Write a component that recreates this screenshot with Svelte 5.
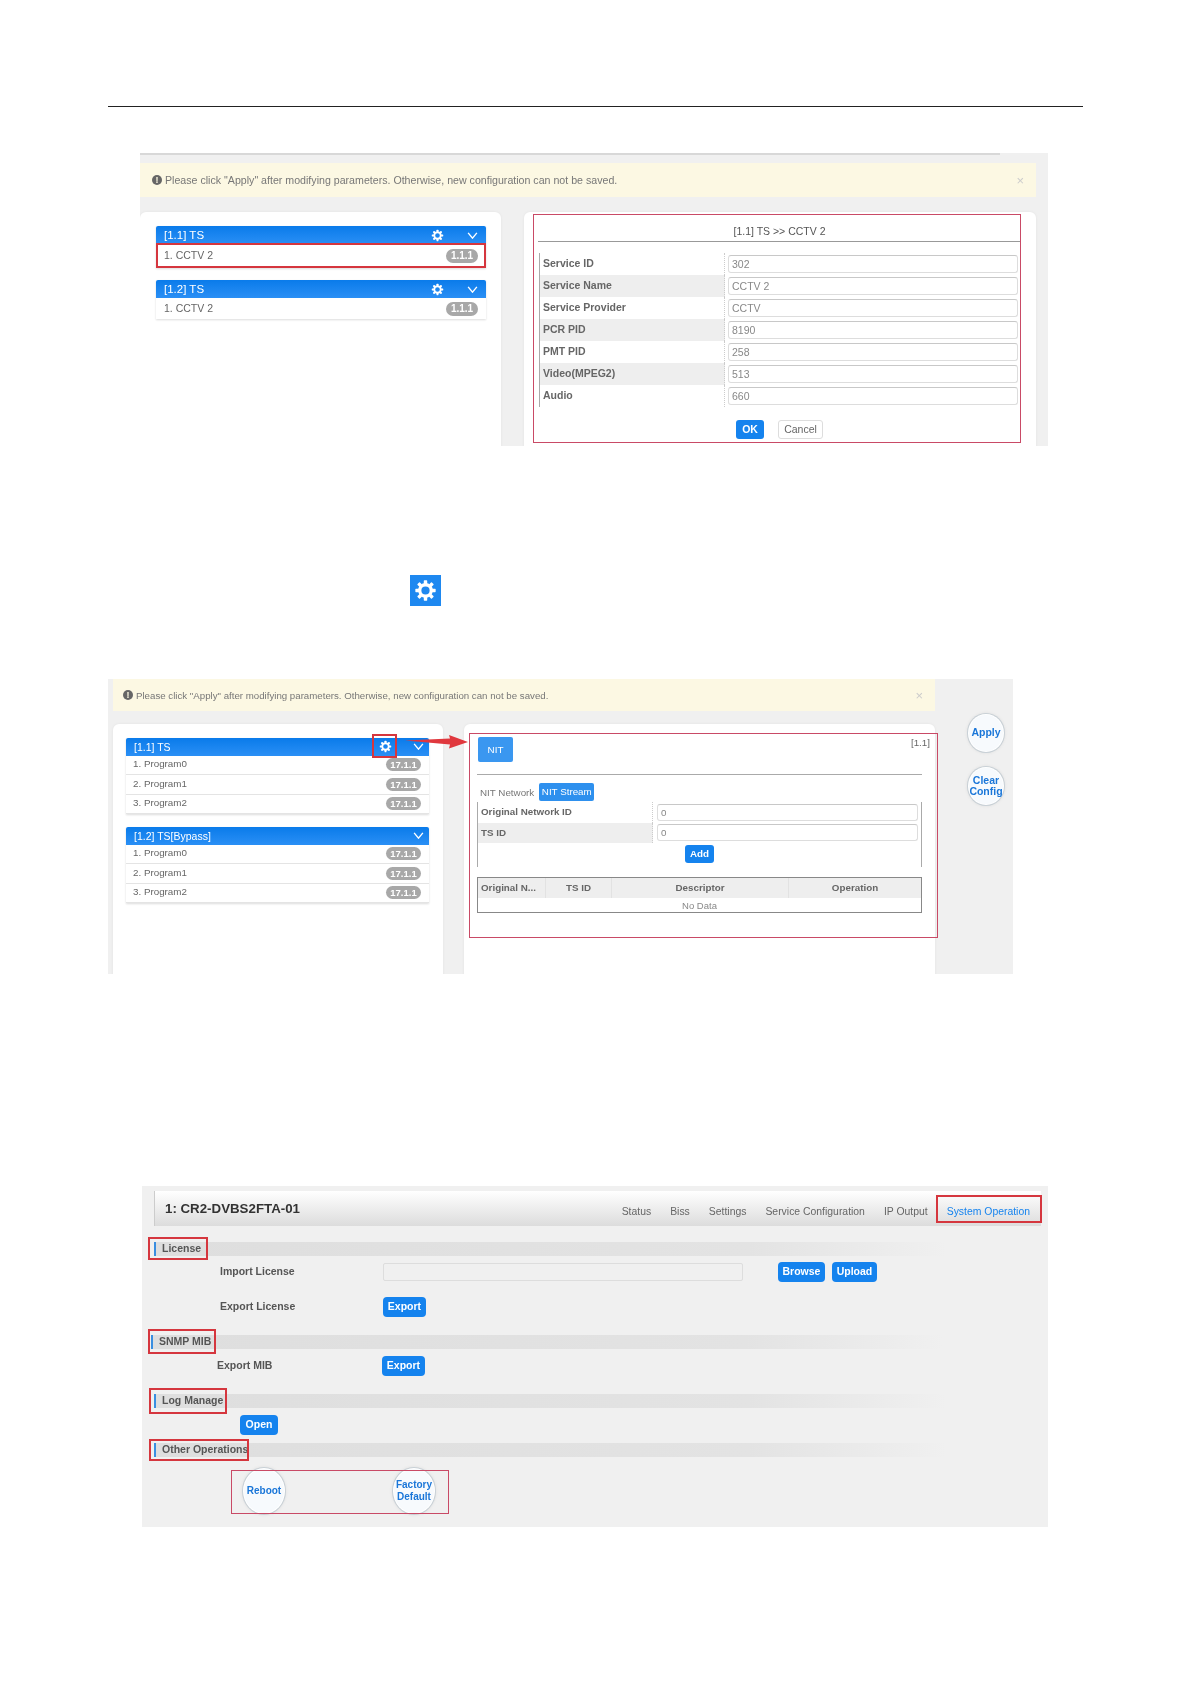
<script>
  const serviceFields = [
    ['Service ID', '302'],
    ['Service Name', 'CCTV 2'],
    ['Service Provider', 'CCTV'],
    ['PCR PID', '8190'],
    ['PMT PID', '258'],
    ['Video(MPEG2)', '513'],
    ['Audio', '660']
  ];
  const programs = ['1. Program0', '2. Program1', '3. Program2'];
  const alertText = 'Please click "Apply" after modifying parameters. Otherwise, new configuration can not be saved.';
  const navItems = ['Status', 'Biss', 'Settings', 'Service Configuration', 'IP Output'];
  const gearTeeth = [0, 45, 90, 135, 180, 225, 270, 315];
</script>

{#snippet gear(cls)}
  <svg class={cls} viewBox="0 0 24 24" aria-hidden="true">
    <circle cx="12" cy="12" r="6" fill="none" stroke="#fff" stroke-width="3.4"/>
    {#each gearTeeth as angle}
      <rect x="10.2" y="1.4" width="3.6" height="4" rx="0.7" fill="#fff" transform="rotate({angle} 12 12)"/>
    {/each}
  </svg>
{/snippet}

{#snippet groupHead(title, hasGear)}
  <div class="group-head">
    <span class="group-title">{title}</span>
    {#if hasGear}{@render gear('head-gear')}{/if}
    <svg class="chevron" viewBox="0 0 12 8" aria-hidden="true">
      <polyline points="1,1 6,7 11,1" fill="none" stroke="#fff" stroke-width="1.6"/>
    </svg>
  </div>
{/snippet}

{#snippet alertBar()}
  <div class="alert">
    <span class="alert-icon">!</span>
    <span class="alert-text">{alertText}</span>
    <span class="alert-close">×</span>
  </div>
{/snippet}

{#snippet section(title, markClass, barClass)}
  <div class="sec {barClass}">
    <span class="sec-label">{title}</span>
    <span class="mark {markClass}"></span>
  </div>
{/snippet}

<div class="page">
  <div class="page-rule"></div>

  <!-- service edit -->
  <section class="shot shot-service">
    <div class="top-strip"></div>
    {@render alertBar()}
    <div class="cards cards-service">
      <div class="card list-card">
        <div class="group">
          {@render groupHead('[1.1] TS', true)}
          <div class="row marked">
            <span class="row-text">1. CCTV 2</span><span class="badge">1.1.1</span>
            <span class="mark mark-row"></span>
          </div>
        </div>
        <div class="group second">
          {@render groupHead('[1.2] TS', true)}
          <div class="row">
            <span class="row-text">1. CCTV 2</span><span class="badge">1.1.1</span>
          </div>
        </div>
      </div>
      <div class="card edit-card">
        <span class="mark mark-edit"></span>
        <div class="edit-title">[1.1] TS &gt;&gt; CCTV 2</div>
        <div class="field-table">
          {#each serviceFields as [label, value]}
            <div class="field">
              <span class="field-label">{label}</span>
              <span class="field-input">{value}</span>
            </div>
          {/each}
        </div>
        <div class="edit-actions">
          <span class="btn btn-ok">OK</span>
          <span class="btn-plain">Cancel</span>
        </div>
      </div>
    </div>
  </section>

  <div class="inline-icon">{@render gear('inline-gear')}</div>

  <!-- NIT -->
  <section class="shot shot-nit">
    <div class="nit-main">
      {@render alertBar()}
      <div class="cards cards-nit">
        <div class="card nit-list">
          <div class="group">
            {@render groupHead('[1.1] TS', true)}
            {#each programs as p}
              <div class="row prog"><span class="row-text">{p}</span><span class="badge wide">17.1.1</span></div>
            {/each}
            <span class="mark mark-gear"></span>
            <svg class="arrow" viewBox="0 0 64 14" aria-hidden="true">
              <path d="M0 5.5 L45 3.5 L44 0 L63 7 L44 13.5 L45 9.5 Z" fill="#e0383e"/>
            </svg>
          </div>
          <div class="group second-nit">
            {@render groupHead('[1.2] TS[Bypass]', false)}
            {#each programs as p}
              <div class="row prog"><span class="row-text">{p}</span><span class="badge wide">17.1.1</span></div>
            {/each}
          </div>
        </div>
        <div class="card nit-card">
          <span class="mark mark-nit"></span>
          <div class="nit-top">
            <span class="nit-tab">NIT</span>
            <span class="nit-id">[1.1]</span>
          </div>
          <div class="subtabs">
            <span>NIT Network</span>
            <span class="subtab-on">NIT Stream</span>
          </div>
          <div class="nit-form">
            <div class="nit-field">
              <span class="field-label">Original Network ID</span>
              <span class="field-input">0</span>
            </div>
            <div class="nit-field">
              <span class="field-label">TS ID</span>
              <span class="field-input">0</span>
            </div>
            <div class="nit-add"><span class="btn btn-add">Add</span></div>
          </div>
          <div class="nit-table">
            <div class="nit-thead">
              <span class="left">Original N...</span>
              <span>TS ID</span>
              <span>Descriptor</span>
              <span>Operation</span>
            </div>
            <div class="nit-empty">No Data</div>
          </div>
        </div>
      </div>
    </div>
    <div class="side-actions">
      <span class="round side">Apply</span>
      <span class="round side">Clear<br />Config</span>
    </div>
  </section>

  <!-- system operation -->
  <section class="shot shot-system">
    <header class="sys-head">
      <span class="sys-title">1: CR2-DVBS2FTA-01</span>
      <nav class="sys-nav">
        {#each navItems as item}<span>{item}</span>{/each}
        <span class="nav-on">System Operation<span class="mark mark-nav"></span></span>
      </nav>
    </header>

    {@render section('License', 'mark-license', 'sec-license')}
    <div class="op-row op-import">
      <span>Import License</span>
      <span class="file-input"></span>
      <span class="btn btn-op browse">Browse</span>
      <span class="btn btn-op upload">Upload</span>
    </div>
    <div class="op-row op-export">
      <span>Export License</span>
      <span class="btn btn-op">Export</span>
    </div>

    {@render section('SNMP MIB', 'mark-snmp', 'sec-snmp')}
    <div class="op-row op-mib">
      <span>Export MIB</span>
      <span class="btn btn-op">Export</span>
    </div>

    {@render section('Log Manage', 'mark-log', 'sec-log')}
    <div class="op-open"><span class="btn btn-op">Open</span></div>

    {@render section('Other Operations', 'mark-other', 'sec-other')}
    <div class="op-rounds">
      <span class="mark mark-rounds"></span>
      <span class="round big">Reboot</span>
      <span class="round big">Factory<br />Default</span>
    </div>
  </section>
</div>

<style>
  :global(body) {
    margin: 0;
    background: #fff;
  }

  .page {
    width: 1191px;
    height: 1684px;
    overflow: hidden;
    padding-top: 106px;
    box-sizing: border-box;
    font-family: 'Liberation Sans', Arial, sans-serif;
    font-size: 10.5px;
    color: #666;
  }

  .page-rule {
    height: 1px;
    width: 975px;
    margin-left: 108px;
    background: #222;
  }

  .shot {
    background: #f0f0f0;
    box-sizing: border-box;
    position: relative;
    filter: blur(0.35px);
  }

  .mark {
    position: absolute;
    box-sizing: border-box;
    border: 2.5px solid #d5363e;
    pointer-events: none;
  }

  /* first shot */
  .shot-service {
    margin: 46px 0 0 140px;
    width: 908px;
    height: 293px;
    overflow: hidden;
  }

  .top-strip {
    height: 2px;
    width: 860px;
    background: #d8d8d8;
  }

  .alert {
    display: flex;
    align-items: center;
    gap: 3px;
    background: #fcf8e3;
    box-sizing: border-box;
    color: #777;
    padding-left: 12px;
    padding-right: 12px;
  }

  .shot-service .alert {
    margin: 8px 12px 0 0;
    height: 34px;
    font-size: 10.63px;
  }

  .alert-icon {
    width: 10px;
    height: 10px;
    border-radius: 50%;
    background: #666;
    color: #fcf8e3;
    font-size: 9px;
    font-weight: bold;
    line-height: 10px;
    text-align: center;
  }

  .alert-close {
    margin-left: auto;
    color: #ccc;
    font-size: 13px;
  }

  .cards {
    display: flex;
  }

  .cards-service {
    margin-top: 15px;
    gap: 23px;
  }

  .card {
    background: #fff;
    border-radius: 6px 6px 0 0;
    box-sizing: border-box;
    position: relative;
    height: 300px;
    box-shadow: 0 0 3px rgba(0, 0, 0, 0.06);
  }

  .list-card {
    width: 361px;
    padding: 14px 15px 0 16px;
  }

  .group {
    position: relative;
    box-shadow: 0 1px 2px rgba(0, 0, 0, 0.14);
  }

  .group.second {
    margin-top: 12px;
  }

  .group.second .row {
    height: 21px;
  }

  .group-head {
    display: flex;
    align-items: center;
    height: 18px;
    padding: 0 8px;
    color: #fff;
    font-size: 11.5px;
    border-radius: 2px 2px 0 0;
    background: linear-gradient(180deg, #0a7bea, #2a8ff5);
  }

  .group-title {
    flex: 1;
  }

  .head-gear {
    width: 13px;
    height: 13px;
    margin-right: 23px;
  }

  .chevron {
    width: 11px;
    height: 7px;
  }

  .row {
    display: flex;
    align-items: center;
    justify-content: space-between;
    position: relative;
    height: 24px;
    padding: 0 8px;
    color: #666;
    background: #fff;
  }

  .row-text {
    margin-top: -2px;
  }

  .mark-row {
    inset: -1px 0 0 0;
  }

  .badge {
    width: 32px;
    height: 14px;
    border-radius: 7px;
    background: #a8a8a8;
    color: #fff;
    font-weight: bold;
    font-size: 10px;
    line-height: 14px;
    text-align: center;
  }

  .badge.wide {
    width: 35px;
    height: 13px;
    line-height: 13px;
    font-size: 9.5px;
  }

  .edit-card {
    width: 512px;
    padding: 2px 15px 0 14px;
  }

  .mark-edit {
    border-width: 1px;
    border-color: #c94a66;
    left: 9px;
    top: 2px;
    width: 488px;
    height: 229px;
  }

  .edit-title {
    height: 27px;
    line-height: 34px;
    text-align: center;
    border-bottom: 1px solid #999;
    color: #555;
  }

  .field-table {
    margin-top: 11px;
    margin-left: 1px;
    margin-right: 3px;
    border-left: 1px solid #aaa;
  }

  .field {
    display: grid;
    grid-template-columns: 185px 1fr;
    height: 22px;
    align-items: center;
  }

  .field:nth-child(even) .field-label {
    background: #eee;
  }

  .field-label {
    display: block;
    height: 100%;
    padding-left: 3px;
    line-height: 20px;
    font-weight: bold;
    color: #666;
    border-right: 1px dotted #ccc;
    box-sizing: border-box;
  }

  .field-input {
    height: 16px;
    margin-left: 3px;
    padding-left: 3px;
    line-height: 16px;
    border: 1px solid #ddd;
    border-top-color: #c8c8c8;
    border-radius: 3px;
    background: #fff;
    color: #888;
  }

  .edit-actions {
    display: flex;
    justify-content: center;
    gap: 14px;
    margin-top: 13px;
  }

  .btn {
    display: inline-block;
    box-sizing: border-box;
    text-align: center;
    color: #fff;
    background: #1583ee;
    border-radius: 3px;
  }

  .btn-ok {
    width: 28px;
    height: 19px;
    line-height: 19px;
    font-weight: bold;
  }

  .btn-plain {
    box-sizing: border-box;
    width: 45px;
    height: 19px;
    line-height: 17px;
    text-align: center;
    border: 1px solid #ddd;
    border-radius: 3px;
    color: #666;
  }

  .inline-icon {
    display: flex;
    align-items: center;
    justify-content: center;
    width: 31px;
    height: 31px;
    margin: 129px 0 0 410px;
    background: #1e88f0;
  }

  .inline-gear {
    width: 23px;
    height: 23px;
  }

  /* second shot */
  .shot-nit {
    display: flex;
    margin: 73px 0 0 108px;
    width: 905px;
    height: 295px;
    overflow: hidden;
    font-size: 9.8px;
  }

  .nit-main {
    width: 822px;
    margin-left: 5px;
    flex: none;
  }

  .shot-nit .alert {
    height: 32px;
    padding-left: 10px;
    font-size: 9.7px;
  }

  .cards-nit {
    margin-top: 13px;
    gap: 21px;
  }

  .nit-list {
    width: 330px;
    padding: 14px 14px 0 13px;
  }

  .nit-list .group-head {
    height: 17.5px;
    padding-right: 5.5px;
    font-size: 10.5px;
  }

  .nit-list .head-gear {
    margin-right: 21px;
  }

  .second-nit {
    margin-top: 13px;
  }

  .row.prog {
    height: 19.5px;
    border-bottom: 1px solid #e4e4e4;
    box-sizing: border-box;
    padding: 0 8px 0 7px;
  }

  .mark-gear {
    left: 246px;
    top: -4px;
    width: 25px;
    height: 24px;
  }

  .arrow {
    position: absolute;
    left: 279px;
    top: -3px;
    width: 64px;
    height: 14px;
    z-index: 2;
  }

  .nit-card {
    width: 471px;
    padding: 13px 13px 0;
  }

  .mark-nit {
    border-width: 1px;
    border-color: #c94a66;
    left: 5px;
    top: 9px;
    width: 469px;
    height: 205px;
  }

  .nit-top {
    display: flex;
    justify-content: space-between;
    height: 25px;
    padding-bottom: 12px;
    border-bottom: 1px solid #aaa;
  }

  .nit-tab {
    width: 35px;
    height: 25px;
    margin-left: 1px;
    line-height: 25px;
    text-align: center;
    color: #fff;
    background: #3a97f0;
    border-radius: 2px;
  }

  .nit-id {
    margin-right: -8px;
    color: #666;
  }

  .subtabs {
    display: flex;
    align-items: center;
    gap: 5px;
    margin-top: 8px;
    padding-left: 3px;
    height: 18px;
    color: #777;
  }

  .subtab-on {
    width: 55px;
    height: 18px;
    line-height: 18px;
    text-align: center;
    color: #fff;
    background: #2e90ee;
    border-radius: 2px;
  }

  .nit-form {
    margin-top: 1px;
    border-left: 1px solid #aaa;
    border-right: 1px solid #aaa;
    height: 65px;
  }

  .nit-field {
    display: grid;
    grid-template-columns: 175px 1fr;
    align-items: center;
    height: 20.5px;
  }

  .nit-field:nth-child(2) .field-label {
    background: #eee;
  }

  .nit-field .field-input {
    height: 15px;
    line-height: 15px;
    margin-left: 4px;
    margin-right: 3px;
  }

  .nit-add {
    display: flex;
    justify-content: center;
    margin-top: 2px;
  }

  .btn-add {
    width: 29px;
    height: 18px;
    line-height: 18px;
    font-weight: bold;
  }

  .nit-table {
    margin-top: 10px;
    border: 1px solid #888;
    box-sizing: border-box;
    height: 36px;
  }

  .nit-thead {
    display: grid;
    grid-template-columns: 67px 66px 177px 1fr;
    height: 20px;
    line-height: 20px;
    text-align: center;
    font-weight: bold;
    background: #eee;
  }

  .nit-thead span + span {
    border-left: 1px solid #e2e2e2;
  }

  .nit-thead .left {
    text-align: left;
    padding-left: 3px;
  }

  .nit-empty {
    height: 14px;
    line-height: 15px;
    text-align: center;
    color: #888;
    font-size: 9.5px;
  }

  .side-actions {
    display: flex;
    flex-direction: column;
    gap: 17px;
    margin: 36px 0 0 34px;
  }

  .round {
    display: flex;
    align-items: center;
    justify-content: center;
    box-sizing: border-box;
    text-align: center;
    border-radius: 50%;
    background: #f7fafd;
    color: #1a76d8;
    font-weight: bold;
    box-shadow: 0 0 0 1px #fff, 0 0 0 2px #c8d0d6, 0 0 3px 2px #ddd;
    line-height: 11.5px;
  }

  .round.side {
    width: 34px;
    height: 36px;
    font-size: 10.5px;
  }

  /* third shot */
  .shot-system {
    margin: 212px 0 0 142px;
    width: 906px;
    height: 341px;
    padding-top: 5px;
  }

  .sys-head {
    display: flex;
    align-items: center;
    justify-content: space-between;
    box-sizing: border-box;
    height: 35px;
    margin: 0 7px 0 12px;
    padding: 0 11px 0 10px;
    background: linear-gradient(180deg, #fff, #dcdcdc);
    border-left: 1px solid #ccc;
  }

  .sys-title {
    font-size: 13.3px;
    font-weight: bold;
    color: #333;
  }

  .sys-nav {
    display: flex;
    gap: 19px;
    margin-top: 6px;
    font-size: 10.42px;
  }

  .nav-on {
    position: relative;
    color: #1583ee;
  }

  .mark-nav {
    left: -11px;
    top: -11px;
    width: 106px;
    height: 28px;
  }

  .sec {
    position: relative;
    height: 14px;
    line-height: 13px;
    margin-left: 12px;
    width: 790px;
    background: linear-gradient(90deg, #dedede 0%, #e3e3e3 75%, rgba(240, 240, 240, 0) 100%);
    border-left: 2px solid #3a8ee0;
    color: #555;
    font-weight: bold;
  }

  .sec-label {
    margin-left: 6px;
  }

  .sec-license {
    margin-top: 16px;
  }

  .sec-snmp {
    margin-top: 18px;
    margin-left: 9px;
  }

  .sec-log {
    margin-top: 18px;
  }

  .sec-other {
    margin-top: 8px;
  }

  .mark-license {
    left: -8px;
    top: -5px;
    width: 60px;
    height: 23px;
  }

  .mark-snmp {
    left: -5px;
    top: -6px;
    width: 68px;
    height: 25px;
  }

  .mark-log {
    left: -7px;
    top: -6px;
    width: 78px;
    height: 26px;
  }

  .mark-other {
    left: -7px;
    top: -4px;
    width: 100px;
    height: 22px;
  }

  .op-row {
    display: grid;
    align-items: center;
    height: 20px;
    padding-left: 78px;
    grid-template-columns: 163px auto;
    justify-content: start;
    font-weight: bold;
    color: #555;
  }

  .op-row > span:first-child {
    margin-top: -3px;
  }

  .op-import {
    margin-top: 6px;
    grid-template-columns: 163px 360px 82px 52px;
  }

  .file-input {
    height: 18px;
    box-sizing: border-box;
    border: 1px solid #ddd;
    border-radius: 2px;
  }

  .btn-op {
    height: 20px;
    line-height: 19px;
    width: 43px;
    font-weight: bold;
    border-radius: 4px;
  }

  .browse {
    width: 47px;
    margin-left: 35px;
  }

  .upload {
    width: 45px;
    margin-left: 7px;
  }

  .op-export {
    margin-top: 15px;
  }

  .op-mib {
    margin-top: 7px;
    padding-left: 75px;
    grid-template-columns: 165px auto;
  }

  .op-open {
    margin-top: 7px;
    padding-left: 98px;
    height: 20px;
  }

  .op-open .btn-op {
    width: 38px;
  }

  .op-rounds {
    position: relative;
    display: flex;
    gap: 110px;
    margin-top: 12px;
    padding-left: 102px;
  }

  .round.big {
    width: 40px;
    height: 44px;
    font-size: 10px;
    line-height: 12px;
  }

  .mark-rounds {
    border-width: 1px;
    border-color: #c94a66;
    left: 89px;
    top: 1px;
    width: 218px;
    height: 44px;
  }
</style>
